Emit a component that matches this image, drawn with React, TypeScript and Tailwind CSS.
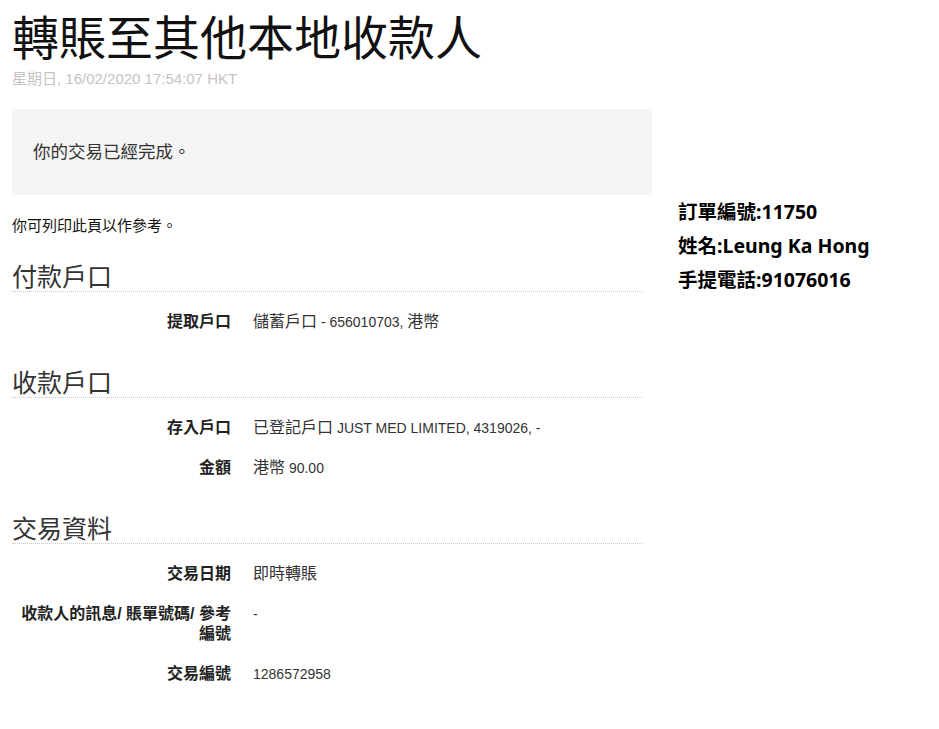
import React from 'react';

const sans = "font-['Liberation_Sans','Noto_Sans_CJK_TC',sans-serif]";

// CJK glyphs in the original render a touch wider than the Latin text around them
function Mixed({ text }: { text: string }) {
  const parts = text.split(/([\u3000-\u303f\u3400-\u9fff\uff00-\uffef]+)/);
  return (
    <>
      {parts.map((p, i) =>
        i % 2 === 1 ? (
          <span key={i} className="text-[16px] leading-[18px]">
            {p}
          </span>
        ) : (
          <React.Fragment key={i}>{p}</React.Fragment>
        )
      )}
    </>
  );
}

type Row = { label: React.ReactNode; value: string };

const sections: { title: string; rows: Row[] }[] = [
  {
    title: '付款戶口',
    rows: [{ label: '提取戶口', value: '儲蓄戶口 - 656010703, 港幣' }],
  },
  {
    title: '收款戶口',
    rows: [
      { label: '存入戶口', value: '已登記戶口 JUST MED LIMITED, 4319026, -' },
      { label: '金額', value: '港幣 90.00' },
    ],
  },
  {
    title: '交易資料',
    rows: [
      { label: '交易日期', value: '即時轉賬' },
      {
        label: (
          <>
            收款人的訊息/ 賬單號碼/ 參考
            <br />
            編號
          </>
        ),
        value: '-',
      },
      { label: '交易編號', value: '1286572958' },
    ],
  },
];

function Section({ title, rows }: { title: string; rows: Row[] }) {
  return (
    <div className="mr-[10px]">
      <h2 className="mt-[33px] border-b border-dotted border-[#c8c8c8] text-[25px] leading-[32px] text-[#333] font-['Noto_Sans_CJK_TC',sans-serif] font-normal">
        {title}
      </h2>
      {rows.map((row, i) => (
        <div key={i} className="flex pt-[20px]">
          <div className="w-[219px] shrink-0 text-right text-[16px] leading-[20px] font-bold text-[#222]">
            {row.label}
          </div>
          <div className="ml-[22px] text-[14px] leading-[20px] text-[#333]">
            <Mixed text={row.value} />
          </div>
        </div>
      ))}
    </div>
  );
}

export default function App() {
  return (
    <div className={`${sans} min-h-[729px] w-[939px] bg-white`}>
      <div className="flex pl-[12px]">
        {/* Main column */}
        <div className="w-[640px] shrink-0">
          <h1 className="mt-[1px] text-[47px] leading-[68px] font-normal text-[#111] font-['Noto_Sans_CJK_TC',serif]">
            轉賬至其他本地收款人
          </h1>
          <p className="text-[15px] leading-[20px] text-[#c4c4c4]">星期日, 16/02/2020 17:54:07 HKT</p>

          <div className="mt-[20px] flex h-[86px] items-center bg-[#f4f4f4] pl-[21px] text-[17.5px] text-[#333]">
            你的交易已經完成。
          </div>

          <p className="mt-[21px] text-[15px] leading-[20px] text-[#111]">你可列印此頁以作參考。</p>

          <div className="-mt-[10px]">
            {sections.map((s) => (
              <Section key={s.title} title={s.title} rows={s.rows} />
            ))}
          </div>
        </div>

        {/* Order info */}
        <div className="ml-[26px] mt-[195px] text-[19.5px] leading-[34px] font-bold text-black font-['Noto_Sans','Noto_Sans_CJK_TC',sans-serif]">
          <p>訂單編號:11750</p>
          <p>姓名:Leung Ka Hong</p>
          <p>手提電話:91076016</p>
        </div>
      </div>
    </div>
  );
}
